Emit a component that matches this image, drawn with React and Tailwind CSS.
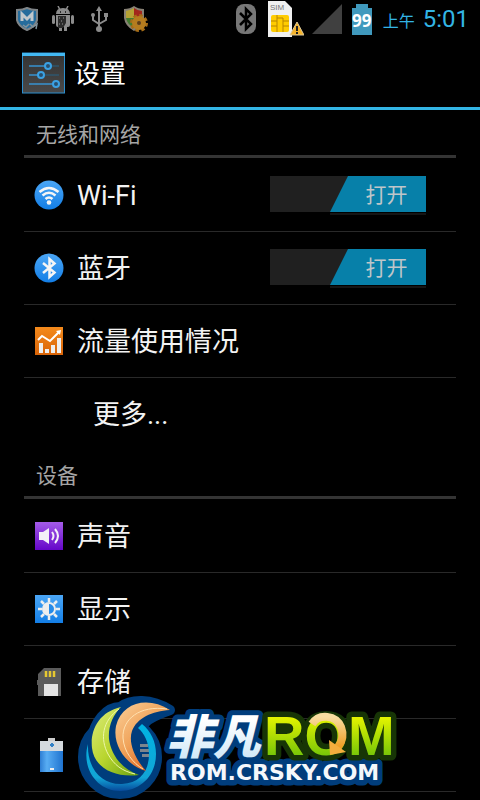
import { useState } from "react"

const StatusIcons = () => (
  <div className="flex flex-1 items-center gap-[10px] opacity-90">
    <svg className="h-6 w-[26px]" viewBox="0 0 26 24">
      <path d="M3 3Q9 3 13 1Q17 3 23 3V13Q22 19 13 23Q4 19 3 13Z" fill="#2a78ad" stroke="#8d9396" strokeWidth="2" />
      <path d="M8 14V7L13 12L18 7V14" fill="none" stroke="#d5dde2" strokeWidth="3" />
      <path d="M9 18L12 20L15 17M16 17L19 20L23 17L22 22" fill="none" stroke="#8ea3ae" strokeWidth="1.5" />
    </svg>
    <svg className="h-[26px] w-[26px]" viewBox="0 0 26 26">
      <g fill="#9b9b9b">
        <path d="M6 8Q6 2 13 2Q20 2 20 8Z" />
        <path d="M8 0L10 4M18 0L16 4" stroke="#9b9b9b" strokeWidth="1.5" />
        <rect x="2" y="9" width="3" height="9" rx="1.5" />
        <rect x="21" y="9" width="3" height="9" rx="1.5" />
        <path d="M6 9H20V19Q20 21 18 21H17V25H14V21H12V25H9V21H8Q6 21 6 19Z" />
      </g>
      <path d="M8 10H16V17L13 22H8Z" fill="#303030" />
      <path d="M9 12h1m3 0h1m-3 3h1m-3 3h1m2 0h1" stroke="#aaa" strokeWidth="1" />
      <path d="M10 6h1m4 0h1" stroke="#111" strokeWidth="1.5" />
    </svg>
    <svg className="h-[26px] w-[26px]" viewBox="0 0 26 26" fill="none" stroke="#9b9b9b" strokeWidth="2">
      <path d="M13 3V22M13 18L7 14V9M13 18L20 14V9" />
      <path d="M10 5L13 0L16 5Z" fill="#9b9b9b" stroke="none" />
      <circle cx="13" cy="23" r="3" fill="#9b9b9b" stroke="none" />
      <circle cx="7" cy="9" r="2" fill="#9b9b9b" stroke="none" />
      <path d="M18 7h4v4h-4z" fill="#9b9b9b" stroke="none" />
    </svg>
    <svg className="h-[26px] w-[26px]" viewBox="0 0 26 26">
      <path d="M2 3Q8 3 12 0Q16 3 22 3V12Q21 20 12 25Q3 20 2 12Z" fill="#968f82" />
      <path d="M4 5Q9 4 12 2V12H4Z" fill="#c9b43a" />
      <path d="M12 2Q16 5 20 5V12H12Z" fill="#b52c20" />
      <path d="M4 12H12V22Q5 18 4 12Z" fill="#4b8a35" />
      <circle cx="17" cy="17" r="7" fill="none" stroke="#b9791a" strokeWidth="4" strokeDasharray="3.2 2.3" />
      <circle cx="17" cy="17" r="4.5" fill="none" stroke="#c98a22" strokeWidth="5" />
      <circle cx="17" cy="17" r="2" fill="#6c4313" />
    </svg>
  </div>
)

const StatusBar = () => (
  <header className="flex h-[38px] items-center pl-[14px] pr-[11px] text-[#33b5e5]">
    <StatusIcons />
    <svg className="h-[30px] w-[20px]" viewBox="0 0 20 30">
      <rect width="20" height="30" rx="8" fill="#777" />
      <path d="M4 9L15 20L10 25V5L15 10L4 21" fill="none" stroke="#000" strokeWidth="2.5" />
    </svg>
    <svg className="ml-3 h-9 w-9" viewBox="0 0 36 36">
      <path d="M0 0H17L24 7V36H0Z" fill="#f0f0f0" />
      <text x="2" y="9" fontSize="8" fontFamily="Liberation Sans, sans-serif" fill="#777">SIM</text>
      <rect x="3" y="14" width="18" height="17" rx="2" fill="#fc0" />
      <path d="M3 20H9V25H3M21 20H15V25H21M9 20V14M15 20V17H9M9 25V31M15 25V31" fill="none" stroke="#b98600" />
      <path d="M29 21L36 34H22Z" fill="#f6b42b" stroke="#d9c79d" />
      <path d="M29 25V30M29 31V33" stroke="#222" strokeWidth="2" />
    </svg>
    <svg className="ml-2 h-[30px] w-[30px]" viewBox="0 0 30 30">
      <path d="M30 0V30H0Z" fill="#404040" />
    </svg>
    <div className="ml-[10px] flex flex-col items-center">
      <span className="h-1 w-3 bg-[#4099bd]" />
      <span className="flex h-[27px] w-5 items-center justify-center bg-[#4099bd] font-['Open_Sans',sans-serif] text-[17px] font-bold text-white">99</span>
    </div>
    <time className="ml-[11px] flex items-baseline gap-2 whitespace-nowrap">
      <span className="font-['Noto_Sans_CJK_SC',sans-serif] text-base">上午</span>
      <span className="font-[Roboto,sans-serif] text-[24px] leading-[30px]">5:01</span>
    </time>
  </header>
)

const SettingsIcon = () => (
  <svg className="h-[42px] w-[43px]" viewBox="0 0 43 42">
    <defs>
      <linearGradient id="panel" x2="0" y2="1">
        <stop stopColor="#333" />
        <stop offset="1" stopColor="#494949" />
      </linearGradient>
    </defs>
    <rect x="0.5" y="1" width="42" height="40" fill="url(#panel)" stroke="#2c8fce" />
    <path d="M0 1H43V4H0Z" fill="#43b8f2" />
    <path d="M7 14H23M7 23H16M7 32H31" stroke="#3793cf" strokeWidth="1.5" />
    <path d="M29 14H37M22 23H37" stroke="#276385" />
    <g fill="#284f6d" stroke="#3ba1e3" strokeWidth="2">
      <circle cx="26" cy="14" r="3" />
      <circle cx="19" cy="23" r="3" />
      <circle cx="34" cy="32" r="3" />
    </g>
  </svg>
)

const WifiIcon = () => (
  <svg viewBox="0 0 30 30">
    <defs>
      <linearGradient id="blue" x2="0" y2="1">
        <stop stopColor="#4ba6f5" />
        <stop offset="1" stopColor="#137ee6" />
      </linearGradient>
    </defs>
    <circle cx="15" cy="15" r="14.5" fill="url(#blue)" />
    <g fill="none" stroke="#f5f5f5" strokeWidth="2.6">
      <path d="M5.5 12Q15 4 24.5 12" />
      <path d="M8.5 15.5Q15 10 21.5 15.5" />
      <path d="M11.5 19Q15 16 18.5 19" />
    </g>
    <circle cx="15" cy="22.5" r="2.3" fill="#f5f5f5" />
  </svg>
)

const BluetoothIcon = () => (
  <svg viewBox="0 0 30 30">
    <circle cx="15" cy="15" r="14.5" fill="url(#blue)" />
    <path d="M9 10L20.5 19.5L15.5 24V6L20.5 10.5L9 20" fill="none" stroke="#f5f5f5" strokeWidth="2.5" />
  </svg>
)

const DataIcon = () => (
  <svg viewBox="0 0 30 30">
    <defs>
      <linearGradient id="orange" x2="0" y2="1">
        <stop stopColor="#f48a1c" />
        <stop offset="1" stopColor="#d96408" />
      </linearGradient>
    </defs>
    <rect x="1" y="1" width="28" height="28" fill="url(#orange)" />
    <path d="M4 14L8 10L16 15L25 6" fill="none" stroke="#fff" strokeWidth="2" />
    <path d="M22 5L27 4L26 9Z" fill="#fff" />
    <path d="M5 17H9V27H5ZM11 23H15V27H11ZM17 19H21V27H17ZM23 12H27V27H23Z" fill="#eee" />
  </svg>
)

const SoundIcon = () => (
  <svg viewBox="0 0 30 30">
    <defs>
      <linearGradient id="purple" x2="0" y2="1">
        <stop stopColor="#a45ce8" />
        <stop offset="1" stopColor="#6506c9" />
      </linearGradient>
    </defs>
    <rect x="1" y="1" width="28" height="28" fill="url(#purple)" />
    <path d="M5 11H9L15 7V23L9 19H5Z" fill="#f4f0f8" />
    <path d="M18 11Q21 15 18 19M21 8Q27 15 21 22" fill="none" stroke="#f4f0f8" strokeWidth="2" />
  </svg>
)

const DisplayIcon = () => (
  <svg viewBox="0 0 30 30">
    <rect x="1" y="1" width="28" height="28" fill="url(#blue)" />
    <path d="M15 4V8M15 22V26M4 15H8M22 15H26M7 7L10 10M20 20L23 23M23 7L20 10M10 20L7 23" stroke="#eee" strokeWidth="2.5" />
    <circle cx="15" cy="15" r="6" fill="#278be8" stroke="#eee" strokeWidth="2" />
    <path d="M15 9A6 6 0 0 0 15 21Z" fill="#eee" />
  </svg>
)

const StorageIcon = () => (
  <svg viewBox="0 0 30 30">
    <path d="M10 1H27V29H4V18H3V13H4V7Z" fill="#5b5b5b" />
    <path d="M12 4V10M16 4V10M20 4V10" stroke="#e6c832" strokeWidth="2.5" />
    <rect x="10" y="17" width="14" height="12" fill="#e4e4e4" />
  </svg>
)

const BatteryIcon = () => (
  <svg viewBox="0 0 30 36">
    <defs>
      <linearGradient id="cell">
        <stop stopColor="#2d7dd3" />
        <stop offset="0.3" stopColor="#58adf3" />
        <stop offset="1" stopColor="#1f73cf" />
      </linearGradient>
    </defs>
    <path d="M14 1H21V5H14Z" fill="#ccc" />
    <rect x="6" y="4" width="23" height="11" fill="#d5dade" />
    <rect x="6" y="14" width="23" height="21" fill="url(#cell)" />
    <path d="M18 6V10M16 8H20" stroke="#3381c6" strokeWidth="2" />
    <path d="M16 32H20" stroke="#eee" strokeWidth="2" />
  </svg>
)

const Toggle = ({ id, checked, onChange }) => (
  <label htmlFor={id} className="relative mb-0.5 flex h-9 w-[156px] cursor-pointer justify-end bg-[#202020]">
    <input id={id} type="checkbox" checked={checked} onChange={onChange} className="absolute inset-0 opacity-0" />
    <span className="flex w-24 items-center justify-center bg-[#0780a9] pl-[17px] font-['Noto_Sans_CJK_SC',sans-serif] text-[21px] text-[#bfc6c9] [clip-path:polygon(18px_0,100%_0,100%_100%,0_100%)]">
      {checked ? "打开" : "关闭"}
    </span>
    <span className="absolute right-0 top-full mt-px h-0.5 w-24 bg-[#151515]" />
  </label>
)

const SectionTitle = ({ children }) => (
  <h2 className="mb-px flex h-12 items-center border-b-[3px] border-[#343434] px-3 pt-1.5 text-[21px] text-[#a5a5a5]">
    {children}
  </h2>
)

const Row = ({ icon: Icon, title, toggle, last }) => (
  <li className={`flex h-[73px] items-center border-b pl-[10px] pr-[30px] ${last ? "border-transparent" : "border-[#292929]"}`}>
    {Icon ? <span className="mr-[13px] w-[30px] shrink-0"><Icon /></span> : <span className="w-[59px]" />}
    <span className="flex-1 pt-0.5 text-[27px] text-[#f3f3f3]">{title}</span>
    {toggle}
  </li>
)

const RomLogo = () => (
  <svg className="absolute left-[76px] top-[694px] h-[106px] w-[332px]" viewBox="0 0 332 106">
    <defs>
      <linearGradient id="leaf" x2="1" y2="1">
        <stop stopColor="#dcec7c" />
        <stop offset="0.5" stopColor="#b9d52f" />
        <stop offset="1" stopColor="#68a210" />
      </linearGradient>
      <linearGradient id="flame" x2="0.8" y2="1">
        <stop stopColor="#fbd09a" />
        <stop offset="0.5" stopColor="#f0a35a" />
        <stop offset="1" stopColor="#d95314" />
      </linearGradient>
      <linearGradient id="ring" x2="0" y2="1">
        <stop stopColor="#00b4e2" />
        <stop offset="0.8" stopColor="#12a5d6" />
        <stop offset="1" stopColor="#074a9c" />
      </linearGradient>
      <linearGradient id="ice" x2="0" y2="1">
        <stop offset="0.3" stopColor="#fff" />
        <stop offset="1" stopColor="#c5e3f6" />
      </linearGradient>
      <linearGradient id="lime" x2="0" y2="1">
        <stop offset="0.2" stopColor="#e6f500" />
        <stop offset="1" stopColor="#56b80a" />
      </linearGradient>
      <linearGradient id="gold" x2="0" y2="1">
        <stop stopColor="#f8dda0" />
        <stop offset="1" stopColor="#ef9f25" />
      </linearGradient>
    </defs>

    <g fill="#003d7c" stroke="#003d7c" strokeWidth="10" strokeLinejoin="round">
      <circle cx="44" cy="63" r="37" />
      <path d="M16 45C18 28 30 13 44 13C55 5 75 4 94 16C84 20 76 22 70 28L40 60Z" />
    </g>
    <path d="M64 50H72V53H64ZM64 55H73V58H64ZM66 60H73V63H66Z" fill="#7d858d" />
    <path d="M12 50C11 76 27 91 46 90C65 89 73 76 73 60C73 48 68 39 62 34L66 30C75 37 80 48 80 60C80 82 64 97 44 97C21 97 5 74 12 50Z" fill="url(#ring)" />
    <path d="M45 13C23 18 14 36 16 54C18 74 39 84 63 81C45 75 35 60 33 45C32 32 37 21 45 13Z" fill="url(#leaf)" />
    <path d="M43 15C26 27 24 45 32 60C38 71 46 77 59 80" fill="none" stroke="#ecf6a9" />
    <path d="M94 16C72 2 46 8 40 32C36 53 52 72 70 77C59 65 52 49 56 37C61 24 76 17 94 16Z" fill="url(#flame)" />
    <path d="M91 15C64 11 46 25 47 44C48 58 57 69 67 75" fill="none" stroke="#ffe0af" />

    <text x="94" y="86" fontFamily="DejaVu Sans, sans-serif" fontSize="22" fontWeight="700" fill="#f5f8fb" stroke="#003d7c" strokeWidth="11" strokeLinejoin="round" paintOrder="stroke">ROM.CRSKY.COM</text>
    <text x="90" y="60" fontFamily="Noto Sans CJK SC, sans-serif" fontSize="47" fontWeight="900" fontStyle="italic" fill="url(#ice)" stroke="#003d7c" strokeWidth="10" strokeLinejoin="round" paintOrder="stroke">非凡</text>
    <text x="188" y="61" fontFamily="Liberation Sans, sans-serif" fontSize="56" fontWeight="700" fill="url(#lime)" stroke="#173506" strokeWidth="11" strokeLinejoin="round" paintOrder="stroke">ROM</text>
    <path d="M236 30C243 19 260 21 265 33C268 41 266 48 262 53" fill="none" stroke="url(#gold)" strokeWidth="8" />
    <path d="M253 46L270 58L254 61Z" fill="#f3ae3d" />
  </svg>
)

export default function App() {
  const [wifi, setWifi] = useState(true)
  const [bluetooth, setBluetooth] = useState(true)

  return (
    <div className="relative min-h-screen overflow-hidden bg-black font-[Roboto,'Noto_Sans_CJK_SC',sans-serif] text-white">
      <StatusBar />
      <div className="flex h-[72px] items-center gap-[9px] border-b-[3px] border-[#33b5e5] px-[22px]">
        <SettingsIcon />
        <h1 className="pt-1 text-[26px]">设置</h1>
      </div>
      <main className="px-6">
        <section>
          <SectionTitle>无线和网络</SectionTitle>
          <ul>
            <Row icon={WifiIcon} title={<label htmlFor="wifi">Wi-Fi</label>} toggle={<Toggle id="wifi" checked={wifi} onChange={() => setWifi(!wifi)} />} />
            <Row icon={BluetoothIcon} title={<label htmlFor="bluetooth">蓝牙</label>} toggle={<Toggle id="bluetooth" checked={bluetooth} onChange={() => setBluetooth(!bluetooth)} />} />
            <Row icon={DataIcon} title="流量使用情况" />
            <Row title="更多..." last />
          </ul>
        </section>
        <section>
          <SectionTitle>设备</SectionTitle>
          <ul>
            <Row icon={SoundIcon} title="声音" />
            <Row icon={DisplayIcon} title="显示" />
            <Row icon={StorageIcon} title="存储" />
            <Row icon={BatteryIcon} title="电池" />
          </ul>
        </section>
      </main>
      <RomLogo />
    </div>
  )
}
